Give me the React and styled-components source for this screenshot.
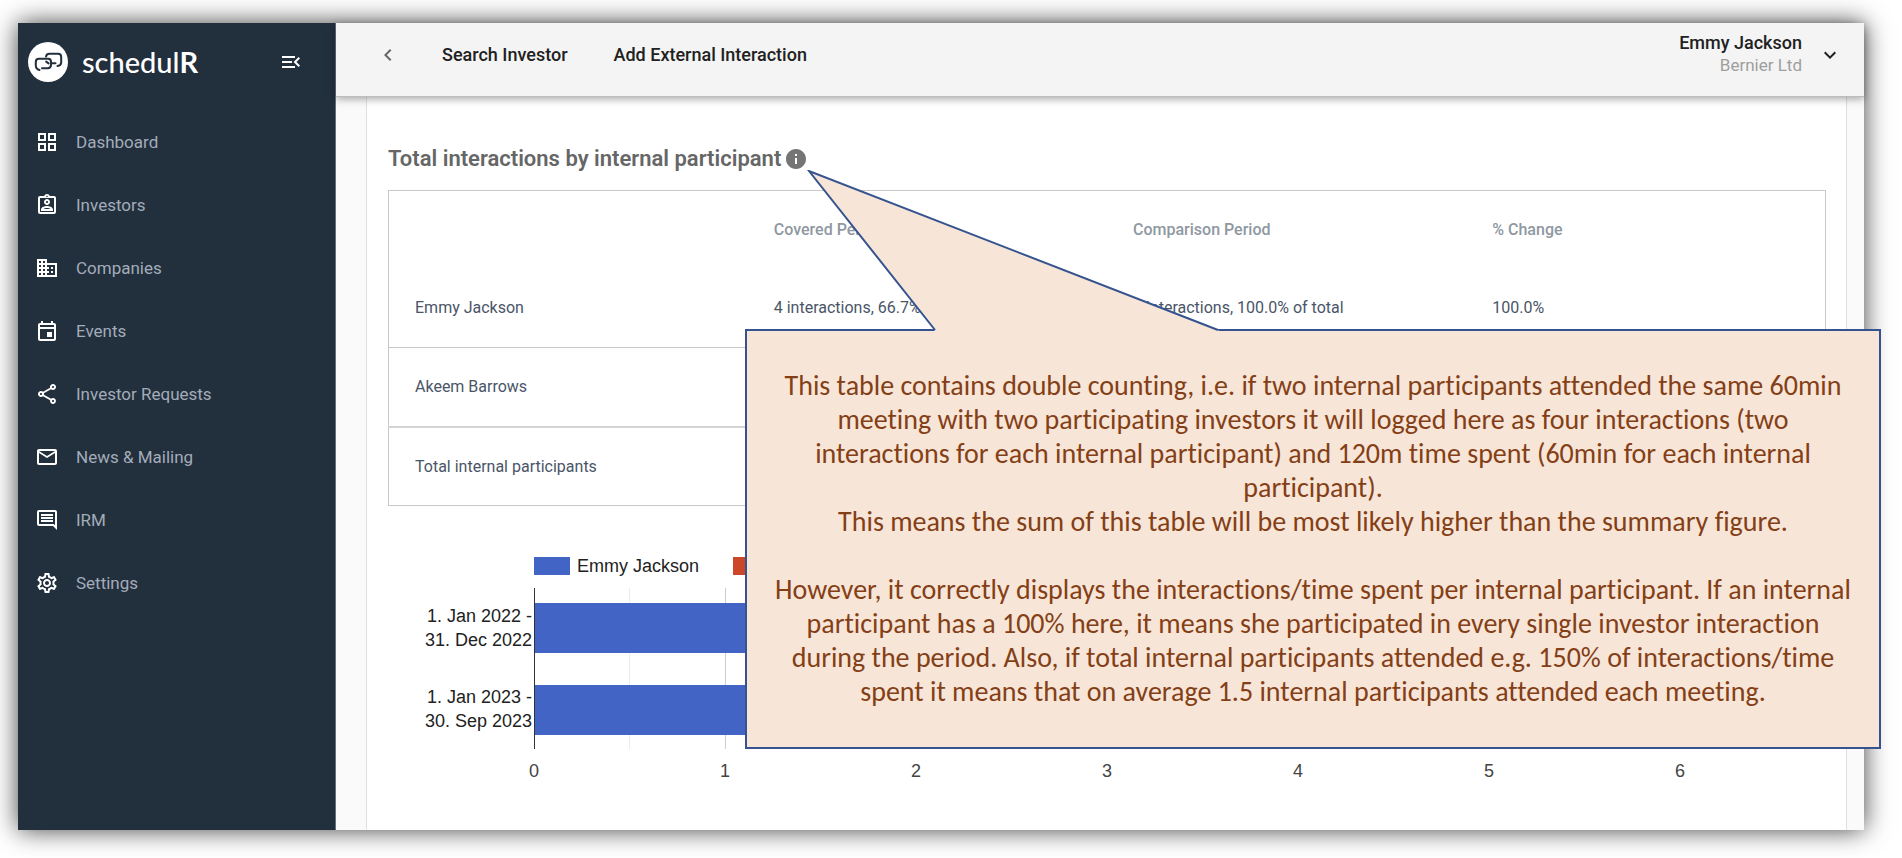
import React from 'react';
import styled, {createGlobalStyle} from 'styled-components';
import {
    MdOutlineGridView,
    MdOutlineAssignmentInd,
    MdBusiness,
    MdOutlineEvent,
    MdOutlineShare,
    MdMailOutline,
    MdOutlineComment,
    MdOutlineSettings,
    MdMenuOpen,
    MdInfo,
    MdKeyboardArrowLeft,
    MdKeyboardArrowDown
} from 'react-icons/md';

const menu = [
    {label: 'Dashboard', icon: <MdOutlineGridView />},
    {label: 'Investors', icon: <MdOutlineAssignmentInd />},
    {label: 'Companies', icon: <MdBusiness />},
    {label: 'Events', icon: <MdOutlineEvent />},
    {label: 'Investor Requests', icon: <MdOutlineShare />},
    {label: 'News & Mailing', icon: <MdMailOutline />},
    {label: 'IRM', icon: <MdOutlineComment />},
    {label: 'Settings', icon: <MdOutlineSettings />}
];

const rows = [
    {name: 'Emmy Jackson', covered: '4 interactions, 66.7% of total', comparison: '2 interactions, 100.0% of total', change: '100.0%'},
    {name: 'Akeem Barrows'},
    {name: 'Total internal participants', total: true}
];

const periods = [
    {from: '1. Jan 2022 -', to: '31. Dec 2022', value: 2},
    {from: '1. Jan 2023 -', to: '30. Sep 2023', value: 4}
];

function Logo() {
    return (
        <svg width="40" height="40" viewBox="0 0 40 40" aria-hidden="true">
            <circle cx="20" cy="20" r="20" fill="#fff" />
            <g fill="none" stroke="#222f3c" strokeWidth="2" strokeLinecap="round" strokeLinejoin="round">
                <path d="M18 14.5 Q18.6 11.8 21.5 11.8 H30 Q33.2 11.8 33.2 15 V20.5 Q33.2 23.6 29.5 24" />
                <path d="M24 21.2 H27.5" />
                <path d="M11.5 28 Q7.8 27 7.8 23.5 V20 Q7.8 16.8 11 16.8 H20 Q23 16.8 23 20 V22.8 Q23 26.2 19.8 26.2 H14" />
                <path d="M18.2 19.6 L20.6 21.4" />
            </g>
        </svg>
    )
}

function Chart() {
    const left = 146;
    const unit = 191;
    const ticks = [0, 1, 2, 3, 4, 5, 6];
    return (
        <ChartSvg viewBox="0 0 1438 240" role="img" aria-label="Interactions by period">
            <rect x={left} y="1" width="36" height="18" fill="#4265c5" />
            <text x="189" y="16">Emmy Jackson</text>
            <rect x="345" y="1" width="36" height="18" fill="#cb4728" />

            {ticks.map((t) => (
                <g key={t}>
                    <rect x={left + t * unit} y="32" width="1" height="161" fill="#ccc" />
                    {t < 6 && <rect x={left + t * unit + 95} y="32" width="1" height="161" fill="#ebebeb" />}
                </g>
            ))}
            {periods.map((p, i) => (
                <g key={p.from}>
                    <rect x={left} y={47 + i * 82} width={p.value * unit} height="50" fill="#4265c5" />
                    <text x="144" y={66 + i * 81} textAnchor="end">{p.from}</text>
                    <text x="144" y={90 + i * 81} textAnchor="end">{p.to}</text>
                </g>
            ))}
            <rect x={left} y="32" width="1" height="161" fill="#333" />
            {ticks.map((t) => (
                <text key={t} className="tick" x={left + t * unit} y="221" textAnchor="middle">{t}</text>
            ))}
        </ChartSvg>
    )
}

function Note() {
    return (
        <NoteStyled role="note">
            <svg className="pointer" width="414" height="161" viewBox="0 0 414 161" aria-hidden="true">
                <path d="M127 161 L128 160 L2 1 L411 160 L412 161 Z" fill="#f7e5d8" />
                <path d="M128 160 L2 1 L411 160" fill="none" stroke="#35538f" strokeWidth="2" />
            </svg>
            <p>
                This table contains double counting, i.e. if two internal participants attended the same 60min
                meeting with two participating investors it will logged here as four interactions (two
                interactions for each internal participant) and 120m time spent (60min for each internal
                participant).
            </p>
            <p>This means the sum of this table will be most likely higher than the summary figure.</p>
            <p className="spaced">
                However, it correctly displays the interactions/time spent per internal participant. If an internal
                participant has a 100% here, it means she participated in every single investor interaction
                during the period. Also, if total internal participants attended e.g. 150% of interactions/time
                spent it means that on average 1.5 internal participants attended each meeting.
            </p>
        </NoteStyled>
    )
}

function App() {
    return (
        <PageStyled>
            <GlobalStyle />
            <WindowStyled>
                <SidebarStyled>
                    <div className="brand">
                        <Logo />
                        <span className="brand-name">schedul<b>R</b></span>
                        <IconButton $color="#fff" aria-label="Collapse menu"><MdMenuOpen /></IconButton>
                    </div>
                    <nav>
                        {menu.map((item) => (
                            <MenuLink href="#" key={item.label}>
                                {item.icon}
                                {item.label}
                            </MenuLink>
                        ))}
                    </nav>
                </SidebarStyled>
                <MainStyled>
                    <HeaderStyled>
                        <IconButton $color="#666" aria-label="Back"><MdKeyboardArrowLeft /></IconButton>
                        <div className="links">
                            <a href="#">Search Investor</a>
                            <a href="#">Add External Interaction</a>
                        </div>
                        <div className="user">
                            <span className="user-name">Emmy Jackson</span>
                            <span className="user-company">Bernier Ltd</span>
                        </div>
                        <IconButton $color="#212121" aria-label="Account menu"><MdKeyboardArrowDown /></IconButton>
                    </HeaderStyled>
                    <CardStyled>
                        <h2>Total interactions by internal participant <MdInfo /></h2>
                        <TableStyled>
                            <thead>
                                <tr>
                                    <th></th>
                                    <th>Covered Period</th>
                                    <th>Comparison Period</th>
                                    <th>% Change</th>
                                </tr>
                            </thead>
                            <tbody>
                                {rows.map((row) => (
                                    <TableRow key={row.name} $total={row.total}>
                                        <td>{row.name}</td>
                                        <td>{row.covered}</td>
                                        <td>{row.comparison}</td>
                                        <td>{row.change}</td>
                                    </TableRow>
                                ))}
                            </tbody>
                        </TableStyled>
                        <Chart />
                    </CardStyled>
                </MainStyled>
                <Note />
            </WindowStyled>
        </PageStyled>
    )
}

const GlobalStyle = createGlobalStyle`
    * {
        box-sizing: border-box;
    }
    body {
        margin: 0;
        background: #fff;
        font-family: Roboto, sans-serif;
    }
    a {
        color: inherit;
        text-decoration: none;
    }
`;

const PageStyled = styled.div`
    padding: 23px 38px 27px 18px;
`;

const WindowStyled = styled.div`
    position: relative;
    display: flex;
    background: #fafafa;
    box-shadow: 0 0 24px rgba(0, 0, 0, .75);
`;

const IconButton = styled.button`
    display: flex;
    padding: 0;
    border: 0;
    background: none;
    color: ${(p) => p.$color};
    font-size: 24px;
    cursor: pointer;
`;

const SidebarStyled = styled.aside`
    flex: 0 0 318px;
    background: #222f3c;
    border-right: 1px solid #64707c;

    .brand{
        display: flex;
        align-items: center;
        height: 78px;
        padding: 0 32px 0 10px;
    }
    .brand-name{
        flex: 1;
        padding: 0 0 2px 14px;
        font-family: Lato, sans-serif;
        font-size: 29px;
        font-weight: 500;
        color: #fff;
    }
    nav{
        padding-top: 9px;
    }
`;

const MenuLink = styled.a`
    display: flex;
    align-items: center;
    gap: 17px;
    height: 63px;
    padding-left: 17px;
    font-size: 17px;
    color: #a3acba;

    svg{
        font-size: 24px;
        color: #fff;
    }
`;

const MainStyled = styled.main`
    flex: 1;
    min-width: 0;
`;

const HeaderStyled = styled.header`
    position: relative;
    display: flex;
    align-items: center;
    height: 74px;
    padding: 0 22px 10px 40px;
    background: #f4f4f4;
    border-bottom: 1px solid #bdbdbd;
    box-shadow: 0 2px 8px rgba(0, 0, 0, .35);

    .links{
        flex: 1;
        display: flex;
        gap: 46px;
        padding-left: 42px;
        font-size: 18px;
        font-weight: 500;
        color: #212121;
    }
    .user{
        display: flex;
        flex-direction: column;
        align-items: flex-end;
        padding: 0 16px 2px 0;
        line-height: 22px;
    }
    .user-name{
        font-size: 18px;
        font-weight: 500;
        color: #212121;
    }
    .user-company{
        font-size: 17px;
        color: #9e9e9e;
    }
`;

const CardStyled = styled.section`
    margin: 0 17px 0 30px;
    padding: 48px 20px 34px 21px;
    background: #fff;
    border: solid #e0e0e0;
    border-width: 0 1px;

    h2{
        display: flex;
        align-items: center;
        gap: 3px;
        margin: 0 0 17px;
        font-size: 22px;
        font-weight: 600;
        line-height: 28px;
        color: #666;
    }
    h2 svg{
        font-size: 24px;
        color: #757575;
    }
`;

const TableStyled = styled.table`
    width: 100%;
    table-layout: fixed;
    border-collapse: collapse;
    border: 1px solid #c8c8c8;

    th, td{
        height: 79px;
        padding: 0 26px;
        font-size: 16px;
        text-align: left;
        white-space: nowrap;
    }
    th{
        height: 78px;
        font-weight: 500;
        color: #8f98a1;
    }
    td{
        color: #4a5568;
    }
`;

const TableRow = styled.tr`
    border-top: ${(p) => (p.$total ? '2px solid #d4d4d4' : '0')};
    border-bottom: 1px solid #c8c8c8;
`;

const ChartSvg = styled.svg`
    display: block;
    width: 100%;
    margin-top: 50px;
    font-family: "Liberation Sans", sans-serif;
    font-size: 18px;

    text{
        fill: #222;
    }
    .tick{
        fill: #444;
    }
`;

const NoteStyled = styled.aside`
    position: absolute;
    top: 306px;
    left: 727px;
    right: -17px;
    padding: 38px 20px;
    background: #f7e5d8;
    border: 2px solid #35538f;
    font-family: Carlito, Lato, sans-serif;
    font-size: 28px;
    font-variant-ligatures: none;
    line-height: 34px;
    text-align: center;
    color: #843f16;

    .pointer{
        position: absolute;
        left: 60px;
        top: -161px;
    }
    p{
        margin: 0;
    }
    .spaced{
        margin-top: 34px;
    }
`;

export default App
